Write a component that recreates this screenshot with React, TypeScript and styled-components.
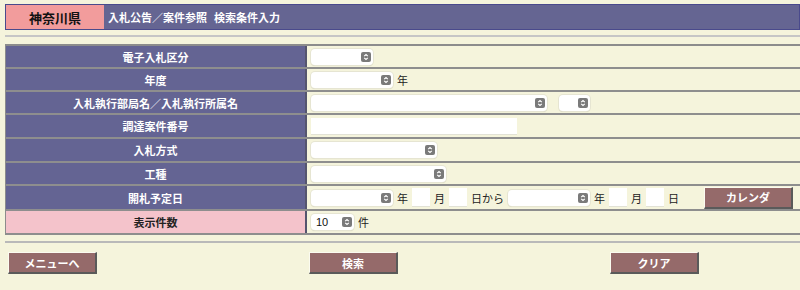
import React from "react";
import styled, { createGlobalStyle } from "styled-components";

const GlobalStyle = createGlobalStyle`
  html, body {
    margin: 0;
    padding: 0;
    background: #f5f4dc;
    font-family: "Noto Sans CJK JP", "Noto Sans", sans-serif;
    overflow: hidden;
  }
  * { box-sizing: border-box; }
`;

const Page = styled.div`
  padding: 4px 0 0 5px;
  width: 800px;
  height: 290px;
`;

const Header = styled.div`
  display: flex;
  height: 26px;
  border: 1px solid #4a4a8c;
  background: #656592;
`;

const Pref = styled.div`
  width: 98px;
  background: #f29c9c;
  color: #111;
  font-size: 13px;
  font-weight: 700;
  display: flex;
  align-items: center;
  justify-content: center;
`;

const Title = styled.div`
  color: #fff;
  font-size: 11px;
  font-weight: 700;
  display: flex;
  align-items: center;
  gap: 7px;
  padding-left: 4px;
`;

const Rule = styled.div<{ $top: number; $bottom: number; $color: string }>`
  height: 2px;
  background: ${(p) => p.$color};
  margin: ${(p) => p.$top}px 0 ${(p) => p.$bottom}px 0;
`;

const Table = styled.div`
  border-top: 2px solid #8c8c8c;
  border-left: 1px solid #8c8c8c;
`;

const Row = styled.div<{ $h: number }>`
  display: grid;
  grid-template-columns: 301px 1fr;
  height: ${(p) => p.$h}px;
  border-bottom: 2px solid #8e8e8e;
`;

const Label = styled.div<{ $pink?: boolean }>`
  background: ${(p) => (p.$pink ? "#f4c3cb" : "#646493")};
  color: ${(p) => (p.$pink ? "#222" : "#fff")};
  font-size: 11px;
  font-weight: 700;
  display: flex;
  align-items: center;
  justify-content: center;
  border-right: 2px solid #55556e;
`;

const Value = styled.div`
  display: flex;
  align-items: center;
  gap: 4px;
  padding-left: 4px;
  font-size: 11px;
  color: #222;
`;

const SelectBox = styled.div<{ $w: number }>`
  width: ${(p) => p.$w}px;
  height: 16px;
  background: #fff;
  border-radius: 4px;
  box-shadow: 0 0 0 1px #e6e5d2, 0 1px 1px rgba(0, 0, 0, 0.18);
  display: flex;
  align-items: center;
  justify-content: space-between;
  padding: 0 2px 0 5px;
  font-family: "Liberation Sans", Arial, sans-serif;
  font-size: 11px;
  color: #111;
  flex: none;
`;

const Spacer = styled.span<{ $w: number }>`
  display: inline-block;
  width: ${(p) => p.$w}px;
  flex: none;
`;

const TextBox = styled.div<{ $w: number; $h: number }>`
  width: ${(p) => p.$w}px;
  height: ${(p) => p.$h}px;
  background: #fff;
  border-bottom: 1px solid #e2e2d6;
  flex: none;
`;

const Button = styled.button`
  width: 89px;
  height: 22px;
  background: #956a6a;
  color: #fff;
  font-family: "Noto Sans CJK JP", sans-serif;
  font-size: 11px;
  font-weight: 700;
  padding: 0;
  border-style: solid;
  border-width: 1px 2px 2px 1px;
  border-color: #fbfbf0 #5a5a5a #5a5a5a #fbfbf0;
  display: flex;
  align-items: center;
  justify-content: center;
  cursor: pointer;
`;

const CalButton = styled(Button)`
  margin-left: 21px;
`;

const Footer = styled.div`
  display: grid;
  grid-template-columns: 301px 301px 1fr;
  padding-left: 3px;
  margin-top: 9px;
`;

const Stepper = () => (
  <svg width="10" height="10" viewBox="0 0 10 10">
    <rect x="0" y="0" width="10" height="10" rx="2" fill="#7a7a7a" />
    <path d="M3.2 4.2 L5 2.5 L6.8 4.2" stroke="#fff" strokeWidth="1.1" fill="none" />
    <path d="M3.2 5.8 L5 7.5 L6.8 5.8" stroke="#fff" strokeWidth="1.1" fill="none" />
  </svg>
);

const Select = ({ w, text }: { w: number; text?: string }) => (
  <SelectBox $w={w}>
    <span>{text ?? ""}</span>
    <Stepper />
  </SelectBox>
);

export default function App() {
  return (
    <Page>
      <GlobalStyle />
      <Header>
        <Pref>神奈川県</Pref>
        <Title>
          <span>入札公告／案件参照</span>
          <span>検索条件入力</span>
        </Title>
      </Header>
      <Rule $top={5} $bottom={7} $color="#c6c6c6" />
      <Table>
        <Row $h={23}>
          <Label>電子入札区分</Label>
          <Value>
            <Select w={62} />
          </Value>
        </Row>
        <Row $h={23}>
          <Label>年度</Label>
          <Value>
            <Select w={82} />
            <span>年</span>
          </Value>
        </Row>
        <Row $h={23}>
          <Label>入札執行部局名／入札執行所属名</Label>
          <Value>
            <Select w={236} />
            <Spacer $w={4} />
            <Select w={31} />
          </Value>
        </Row>
        <Row $h={24}>
          <Label>調達案件番号</Label>
          <Value>
            <TextBox $w={206} $h={17} />
          </Value>
        </Row>
        <Row $h={24}>
          <Label>入札方式</Label>
          <Value>
            <Select w={126} />
          </Value>
        </Row>
        <Row $h={23}>
          <Label>工種</Label>
          <Value>
            <Select w={135} />
          </Value>
        </Row>
        <Row $h={25}>
          <Label>開札予定日</Label>
          <Value>
            <Select w={82} />
            <span>年</span>
            <TextBox $w={18} $h={19} />
            <span>月</span>
            <TextBox $w={18} $h={19} />
            <span>日から</span>
            <Select w={82} />
            <span>年</span>
            <TextBox $w={18} $h={19} />
            <span>月</span>
            <TextBox $w={18} $h={19} />
            <span>日</span>
            <CalButton>カレンダ</CalButton>
          </Value>
        </Row>
        <Row $h={24}>
          <Label $pink>表示件数</Label>
          <Value>
            <Select w={43} text="10" />
            <span>件</span>
          </Value>
        </Row>
      </Table>
      <Rule $top={6} $bottom={0} $color="#b9b9b9" />
      <Footer>
        <div>
          <Button>メニューへ</Button>
        </div>
        <div>
          <Button>検索</Button>
        </div>
        <div>
          <Button>クリア</Button>
        </div>
      </Footer>
    </Page>
  );
}
